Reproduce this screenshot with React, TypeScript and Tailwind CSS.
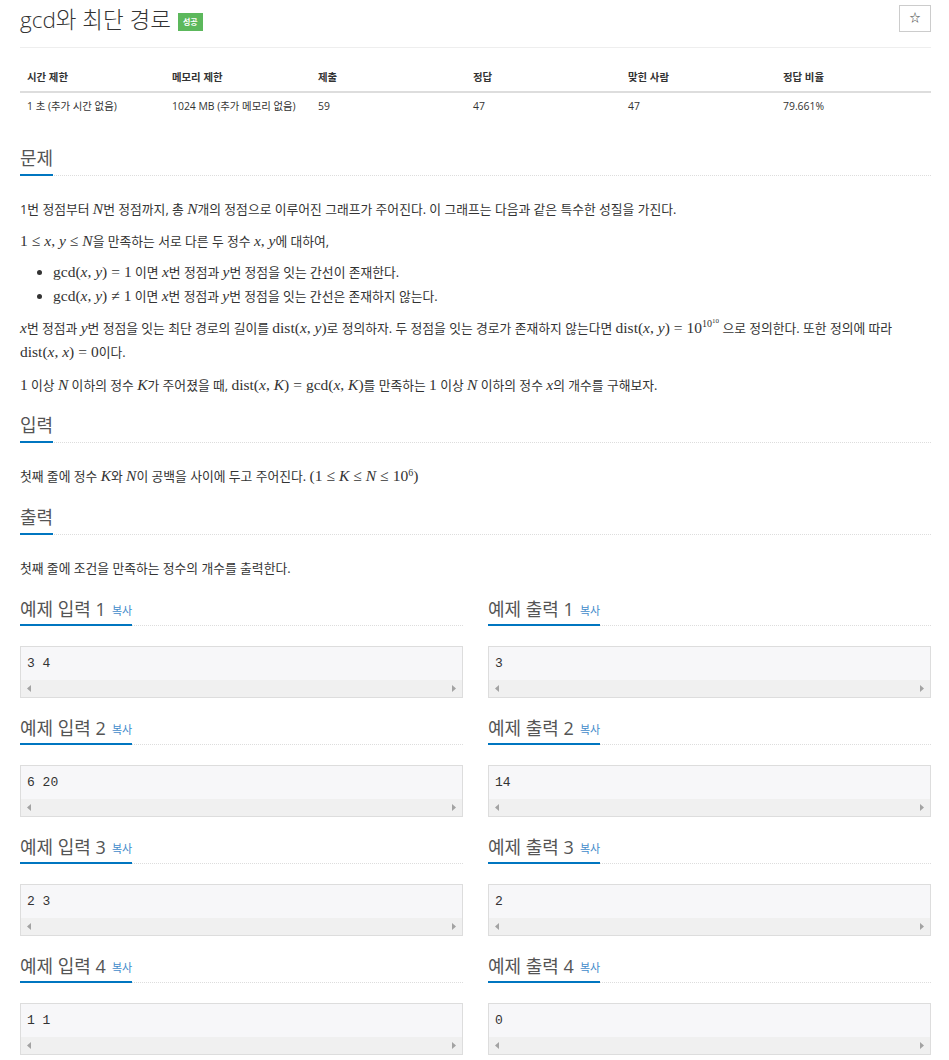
import React from "react";

const SANS = "font-['Open_Sans','Noto_Sans_CJK_KR',sans-serif]";

// 수식 조각
function V({ children }: { children: React.ReactNode }) {
  return (
    <span className="font-['Liberation_Serif',serif] italic text-[15.5px] leading-none">
      {children}
    </span>
  );
}

function R({ children }: { children: React.ReactNode }) {
  return (
    <span className="font-['Liberation_Serif',serif] text-[15.5px] leading-none">
      {children}
    </span>
  );
}

function Op({ children }: { children: React.ReactNode }) {
  return (
    <span className="font-['Liberation_Serif',serif] text-[15.5px] leading-none mx-[4px]">
      {children}
    </span>
  );
}

function Heading({ title }: { title: string }) {
  return (
    <div className="border-b border-dotted border-[#ddd] mb-[21px]">
      <span className="inline-block text-[18px] leading-[24px] pb-[4px] border-b-2 border-[#0076c0] -mb-px text-[#555]">
        {title}
      </span>
    </div>
  );
}

function SampleBox({ title, value }: { title: string; value: string }) {
  return (
    <div className="mb-[18px]">
      <div className="border-b border-dotted border-[#ddd] mb-[20px] h-[29px]">
        <span className="inline-flex items-start gap-[6px] h-[29px] text-[18px] leading-[24px] border-b-2 border-[#0076c0] text-[#555]">
          {title}
          <span className="text-[11px] leading-[24px] text-[#428bca] pt-[2px]">복사</span>
        </span>
      </div>
      <div className="border border-[#ddd] bg-[#f7f7f9]">
        <div className="h-[33px] flex items-center px-[6px] font-['Liberation_Mono',monospace] text-[13px] text-[#333] whitespace-pre">
          {value}
        </div>
        <div className="h-[17px] bg-[#f0f0f0] flex items-center justify-between px-[6px]">
          <svg width="4" height="7" viewBox="0 0 4 7">
            <path d="M4 0 L0 3.5 L4 7 Z" fill="#a3a3a3" />
          </svg>
          <svg width="4" height="7" viewBox="0 0 4 7">
            <path d="M0 0 L4 3.5 L0 7 Z" fill="#a3a3a3" />
          </svg>
        </div>
      </div>
    </div>
  );
}

const stats = [
  { label: "시간 제한", value: "1 초 (추가 시간 없음)" },
  { label: "메모리 제한", value: "1024 MB (추가 메모리 없음)" },
  { label: "제출", value: "59" },
  { label: "정답", value: "47" },
  { label: "맞힌 사람", value: "47" },
  { label: "정답 비율", value: "79.661%" },
];

const samples = [
  ["3 4", "3"],
  ["6 20", "14"],
  ["2 3", "2"],
  ["1 1", "0"],
];

export default function App() {
  return (
    <div className={`${SANS} bg-white text-[#333] pl-[20px] pr-[18px] pb-8`}>
      {/* 제목 */}
      <div className="flex items-start justify-between border-b border-[#eee] h-[48px] pt-[5px]">
        <div className="flex items-center gap-[7px] pt-[1px]">
          <h1 className="text-[22.5px] leading-[28px] font-light text-[#333]">
            gcd와 최단 경로
          </h1>
          <span className="bg-[#5cb85c] text-white text-[8px] font-bold px-[5px] h-[18px] flex items-center mt-[4px]">
            성공
          </span>
        </div>
        <button className="w-[32px] h-[27px] border border-[#ccc] flex items-center justify-center text-[11px] text-[#333]">
          ☆
        </button>
      </div>

      {/* 통계 */}
      <div className="mt-[17px] text-[10.4px]">
        <div className="grid grid-cols-[145px_146px_155px_155px_155px_155px] border-b-2 border-[#ddd] h-[28px] items-center">
          {stats.map((s) => (
            <div key={s.label} className="px-[7px] font-bold">
              {s.label}
            </div>
          ))}
        </div>
        <div className="grid grid-cols-[145px_146px_155px_155px_155px_155px] h-[28px] items-center">
          {stats.map((s) => (
            <div key={s.label} className="px-[7px]">
              {s.value}
            </div>
          ))}
        </div>
      </div>

      {/* 문제 */}
      <div className="mt-[25px]">
        <Heading title="문제" />
        <div className="text-[12.8px] leading-[24px]">
          <p className="mb-[8px]">
            1번 정점부터 <V>N</V>번 정점까지, 총 <V>N</V>개의 정점으로 이루어진 그래프가 주어진다. 이 그래프는 다음과 같은 특수한 성질을 가진다.
          </p>
          <p className="mb-[7px]">
            <R>1</R>
            <Op>≤</Op>
            <V>x</V>
            <R>, </R>
            <V>y</V>
            <Op>≤</Op>
            <V>N</V>을 만족하는 서로 다른 두 정수 <V>x</V>
            <R>, </R>
            <V>y</V>에 대하여,
          </p>
          <ul className="list-disc pl-[33px] mb-[8px]">
            <li>
              <R>gcd(</R>
              <V>x</V>
              <R>, </R>
              <V>y</V>
              <R>)</R>
              <Op>=</Op>
              <R>1</R> 이면 <V>x</V>번 정점과 <V>y</V>번 정점을 잇는 간선이 존재한다.
            </li>
            <li>
              <R>gcd(</R>
              <V>x</V>
              <R>, </R>
              <V>y</V>
              <R>)</R>
              <Op>≠</Op>
              <R>1</R> 이면 <V>x</V>번 정점과 <V>y</V>번 정점을 잇는 간선은 존재하지 않는다.
            </li>
          </ul>
          <p className="mb-[9px]">
            <V>x</V>번 정점과 <V>y</V>번 정점을 잇는 최단 경로의 길이를 <R>dist(</R>
            <V>x</V>
            <R>, </R>
            <V>y</V>
            <R>)</R>로 정의하자. 두 정점을 잇는 경로가 존재하지 않는다면 <R>dist(</R>
            <V>x</V>
            <R>, </R>
            <V>y</V>
            <R>)</R>
            <Op>=</Op>
            <R>
              10
              <sup className="text-[10px] -top-[6px]">
                10<sup className="text-[7px] -top-[4px]">10</sup>
              </sup>
            </R>{" "}
            으로 정의한다. 또한 정의에 따라 <R>dist(</R>
            <V>x</V>
            <R>, </R>
            <V>x</V>
            <R>)</R>
            <Op>=</Op>
            <R>0</R>이다.
          </p>
          <p>
            <R>1</R> 이상 <V>N</V> 이하의 정수 <V>K</V>가 주어졌을 때, <R>dist(</R>
            <V>x</V>
            <R>, </R>
            <V>K</V>
            <R>)</R>
            <Op>=</Op>
            <R>gcd(</R>
            <V>x</V>
            <R>, </R>
            <V>K</V>
            <R>)</R>를 만족하는 <R>1</R> 이상 <V>N</V> 이하의 정수 <V>x</V>의 개수를 구해보자.
          </p>
        </div>
      </div>

      {/* 입력 */}
      <div className="mt-[16px]">
        <Heading title="입력" />
        <p className="text-[12.8px] leading-[24px]">
          첫째 줄에 정수 <V>K</V>와 <V>N</V>이 공백을 사이에 두고 주어진다. <R>(1</R>
          <Op>≤</Op>
          <V>K</V>
          <Op>≤</Op>
          <V>N</V>
          <Op>≤</Op>
          <R>
            10<sup className="text-[10px]">6</sup>)
          </R>
        </p>
      </div>

      {/* 출력 */}
      <div className="mt-[17px]">
        <Heading title="출력" />
        <p className="text-[12.8px] leading-[24px]">첫째 줄에 조건을 만족하는 정수의 개수를 출력한다.</p>
      </div>

      {/* 예제 */}
      <div className="mt-[17px] grid grid-cols-2 gap-x-[25px]">
        {samples.map(([input, output], i) => (
          <React.Fragment key={i}>
            <SampleBox title={`예제 입력 ${i + 1}`} value={input} />
            <SampleBox title={`예제 출력 ${i + 1}`} value={output} />
          </React.Fragment>
        ))}
      </div>
    </div>
  );
}
